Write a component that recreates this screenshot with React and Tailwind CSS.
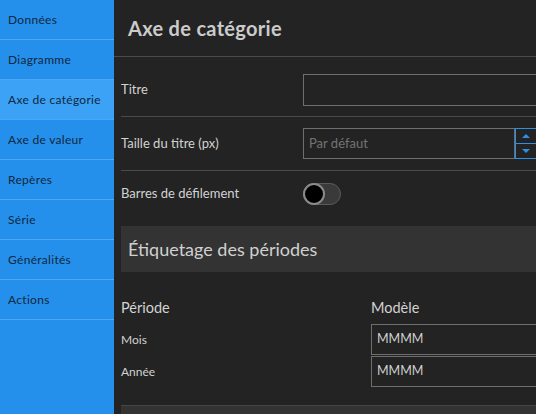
import React from "react";

const menu = [
  "Données",
  "Diagramme",
  "Axe de catégorie",
  "Axe de valeur",
  "Repères",
  "Série",
  "Généralités",
  "Actions",
];

function Toggle() {
  return (
    <div className="relative h-[22px] w-[38px] rounded-full border border-[#5a5a5a] bg-[#3a3a3a]">
      <div className="absolute -left-px -top-px h-[22px] w-[22px] rounded-full border-2 border-[#8a8a8a] bg-black" />
    </div>
  );
}

export default function App() {
  return (
    <div
      className="flex h-[414px] w-[536px] overflow-hidden bg-[#232323]"
      style={{ fontFamily: "Lato, 'Open Sans', sans-serif" }}
    >
      {/* Menu de gauche */}
      <div className="w-[114px] shrink-0 bg-[#2490ec]">
        {menu.map((item) => (
          <div
            key={item}
            className={`flex h-10 items-center border-b border-[#4aa9f5] pl-[8px] text-[12px] tracking-[0.3px] text-[#10273d] ${
              item === "Axe de catégorie" ? "bg-[#3ba2f6]" : ""
            }`}
          >
            {item}
          </div>
        ))}
      </div>

      {/* Panneau principal */}
      <div className="min-w-0 flex-1 overflow-hidden">
        <div className="flex h-[57px] items-center border-b border-[#4a4a4a] pl-[14px] text-[20px] font-bold tracking-[0.3px] text-[#cbcbcb]">
          Axe de catégorie
        </div>

        <div className="pl-[7px] text-[13px] text-[#d2d2d2]">
          {/* Titre */}
          <div className="flex items-center border-b border-[#4a4a4a] pb-[10px] pt-[17px]">
            <div className="w-[182px] shrink-0">Titre</div>
            <div className="h-[32px] w-[260px] shrink-0 border border-[#6e6e6e]" />
          </div>

          {/* Taille du titre */}
          <div className="flex h-[54px] items-center border-b border-[#4a4a4a]">
            <div className="w-[182px] shrink-0">Taille du titre (px)</div>
            <div className="flex h-[31px] w-[212px] shrink-0 items-center border border-[#6e6e6e] pl-[5px] text-[#747474]">
              Par défaut
            </div>
            <div className="flex h-[31px] w-[30px] shrink-0 flex-col border border-[#2d8fe6]">
              <div className="flex flex-1 items-center justify-center border-b border-[#2d8fe6] pr-[8px]">
                <div className="h-0 w-0 border-x-[4px] border-b-[4px] border-x-transparent border-b-[#2d8fe6]" />
              </div>
              <div className="flex flex-1 items-center justify-center pr-[8px]">
                <div className="h-0 w-0 border-x-[4px] border-t-[4px] border-x-transparent border-t-[#2d8fe6]" />
              </div>
            </div>
          </div>

          {/* Barres de défilement */}
          <div className="flex h-[45px] items-center">
            <div className="w-[182px] shrink-0">Barres de défilement</div>
            <Toggle />
          </div>

          {/* Étiquetage des périodes */}
          <div className="mt-[10px] flex h-[46px] items-center bg-[#333333] pl-[7px] text-[18px] text-[#d0d0d0]">
            Étiquetage des périodes
          </div>

          <div className="mt-[26px] flex h-[20px] items-center text-[14.5px]">
            <div className="w-[250px] shrink-0">Période</div>
            <div>Modèle</div>
          </div>

          <div className="mt-[6px] flex h-[31px] items-center">
            <div className="w-[250px] shrink-0 text-[12px]">Mois</div>
            <div className="flex h-[31px] w-[200px] shrink-0 items-center border border-[#6e6e6e] pl-[5px] text-[12.5px] text-[#cfcfcf]">
              MMMM
            </div>
          </div>
          <div className="mt-px flex h-[31px] items-center">
            <div className="w-[250px] shrink-0 text-[12px]">Année</div>
            <div className="flex h-[31px] w-[200px] shrink-0 items-center border border-[#6e6e6e] pl-[5px] text-[12.5px] text-[#cfcfcf]">
              MMMM
            </div>
          </div>

          <div className="mt-[18px] h-[40px] border-t border-[#444] bg-[#333333]" />
        </div>
      </div>
    </div>
  );
}
